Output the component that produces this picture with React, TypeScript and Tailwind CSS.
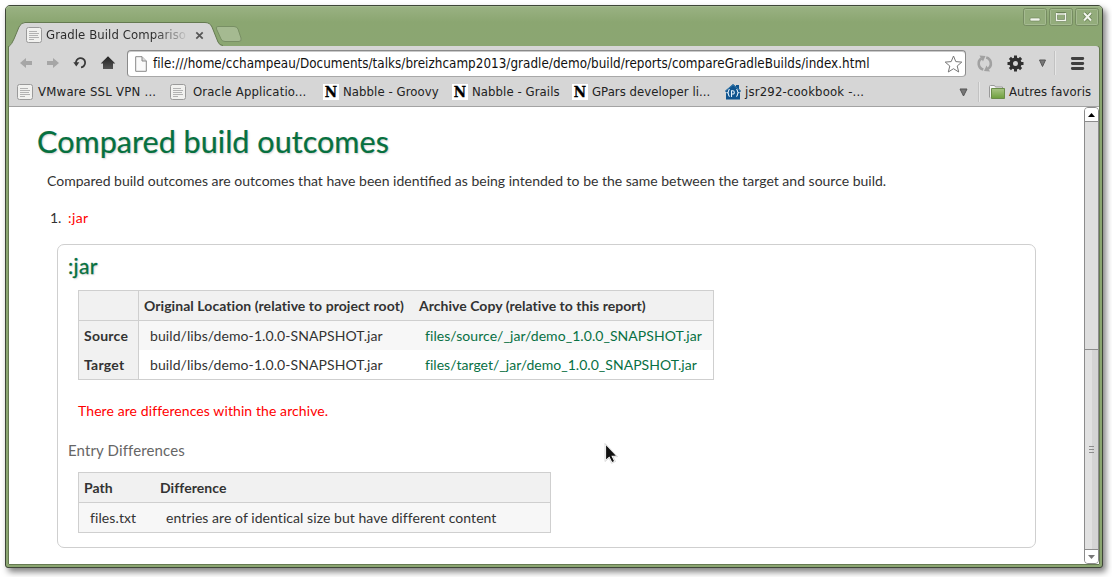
import React from "react";

const ui = "font-['DejaVu_Sans_Condensed','DejaVu_Sans',sans-serif] [font-stretch:condensed]";

function PageIcon() {
  return (
    <svg width="16" height="16" viewBox="0 0 16 16" className="shrink-0">
      <rect x="0.5" y="0.5" width="15" height="15" rx="2" fill="#f1f1ef" stroke="#9a9a9a" />
      <path d="M3 4.5h8M3 6.5h10M3 8.5h9M3 10.5h10M3 12.5h5" stroke="#b2b2b2" />
    </svg>
  );
}

function NabbleIcon() {
  return (
    <span className="flex h-4 w-4 shrink-0 items-center justify-center bg-white font-['DejaVu_Serif',serif] text-[15px] leading-4 font-bold text-black [-webkit-text-stroke:0.3px_#000]">
      N
    </span>
  );
}

function HouseIcon() {
  return (
    <svg width="16" height="16" viewBox="0 0 16 16" className="shrink-0">
      <path d="M8 0L11 2.5V1h3v4l2 2-1 1v7.5H1V8L0 7z" fill="#0f548f" />
      <path d="M0.5 7L8 .8 15.500 7" fill="none" stroke="#3b7cab" />
      <path d="M4.800 5.500q-1.300 0-1.300 1.500t-1 1.800q1 .3 1 1.800t1.300 1.900M11.200 5.500q1.300 0 1.300 1.500t1 1.800q-1 .3-1 1.800t-1.300 1.900M6.500 13V6.800h1.300q1.500 0 1.500 1.600T7.800 10H6.500" fill="none" stroke="#e4f0fa" strokeWidth="1.100" />
    </svg>
  );
}

function Tri() {
  return (
    <svg width="9" height="9" viewBox="0 0 9 9" className="shrink-0">
      <path d="M1 1h7L4.500 8z" fill="#777" stroke="#555" />
    </svg>
  );
}

function TabStrip() {
  return (
    <div className="relative flex h-[40px] shrink-0 rounded-t-[4px] bg-linear-to-b from-[#9ab283] via-[#8ba671] via-40% to-[#8ba672] shadow-[inset_0_1px_0_#a4ba8f]">
      <svg width="245" height="42" viewBox="6 6 245 42" className="absolute top-0 left-0">
        <path d="M9 48V46Q12 44 14 39L19 27Q21 22.500 25 22.500H205Q210 22.500 212 27L218 42Q219.500 45.500 223 46V48z" fill="#d6d6d6" />
        <path d="M8.500 47Q12 44 14 39L19 27Q21 22.500 25 22.500H205Q210 22.500 212 27L218 42Q219.500 45.500 223 45.500" fill="none" stroke="#657a51" />
        <path d="M218 26.500H234Q237 26.500 238 29L241 38Q242 41.500 239 41.500H225Q222 41.500 221 39L216.500 29Q215.500 26.500 218 26.500z" fill="#a5ba91" stroke="#788f64" />
      </svg>
      <div className="relative mt-[17px] ml-5 flex h-6 items-center">
        <PageIcon />
        <span className={`${ui} ml-1 w-[143px] overflow-hidden bg-linear-to-r from-[#2b2b2b] from-75% to-[#d6d6d6] bg-clip-text text-[13px] tracking-[0.08px] whitespace-nowrap text-transparent`}>
          Gradle Build Compariso
        </span>
        <svg width="9" height="9" viewBox="0 0 9 9" className="ml-[6px]">
          <path d="M1.300 1.300l6.400 6.400M7.700 1.300l-6.400 6.400" stroke="#555" strokeWidth="1.700" />
        </svg>
      </div>
      <div className="absolute top-0 right-[2px] h-[22px] w-[78px]">
        <svg width="78" height="22" viewBox="1022 6 78 22">
          {[1023.5, 1049.5, 1075.5].map((x) => (
            <g key={x}>
              <rect x={x} y="8.500" width="23" height="17" rx="2" fill="#93ac7b" stroke="#768c62" />
              <rect x={x + 1} y="9.500" width="21" height="15" rx="1" fill="none" stroke="#a5ba91" />
            </g>
          ))}
          <rect x="1030" y="18" width="10" height="3" rx="1" fill="#f2f5ed" stroke="#687f54" strokeWidth=".6" />
          <rect x="1056.500" y="13.500" width="9" height="7" rx="1" fill="none" stroke="#687f54" strokeWidth="3" />
          <path d="M1056.500 13v7.500h9V13M1056 14h10" fill="none" stroke="#f2f5ed" strokeWidth="1.500" />
          <path d="M1084 13l7 7.500M1091 13l-7 7.500" stroke="#687f54" strokeWidth="3.500" />
          <path d="M1084 13l7 7.500M1091 13l-7 7.500" stroke="#f2f5ed" strokeWidth="2" />
        </svg>
      </div>
    </div>
  );
}

function Toolbar() {
  return (
    <div className="flex h-[32px] shrink-0 items-start pt-1">
      <svg width="118" height="28" viewBox="9 50 118 28" className="shrink-0">
        <defs>
          <linearGradient id="home" x1="0" y1="0" x2="0" y2="1">
            <stop offset="0" stopColor="#222" />
            <stop offset="1" stopColor="#555" />
          </linearGradient>
        </defs>
        <path d="M20 63l6-5v3h6v4h-6v3z" fill="#a6a6a6" />
        <path d="M59 63l-6-5v3h-6v4h6v3z" fill="#a6a6a6" />
        <path d="M76 63.500A4.600 4.600 0 1 1 81 67.300" fill="none" stroke="#3a3a3a" strokeWidth="1.800" />
        <path d="M73.300 62.300h6l-3 4.200z" fill="#3a3a3a" />
        <path d="M108 56.300l7.300 7.200h-2.300v5.500h-10v-5.500h-2.300z" fill="url(#home)" />
      </svg>
      <div className="flex h-[27px] w-[839px] shrink-0 items-center rounded-[4px] border border-[#8a8a8a] border-b-[#a8a8a8] bg-white px-[7px] shadow-[inset_0_1px_0_#c9c9c9]">
        <svg width="12" height="16" viewBox="0 0 12 16" className="shrink-0">
          <path d="M.7.700h6.300l4.300 4.300v10.300H.7z" fill="#fafafa" stroke="#888" />
          <path d="M7 .7V5h4.300" fill="#ddd" stroke="#888" />
        </svg>
        <span className={`${ui} ml-[6px] text-[13.333px] tracking-[0.028px] whitespace-nowrap text-[#111]`}>
          file:///home/cchampeau/Documents/talks/breizhcamp2013/gradle/demo/build/reports/compareGradleBuilds/index.html
        </span>
        <svg width="19" height="18" viewBox="0 0 19 18" className="-mr-[5px] ml-auto shrink-0">
          <path d="M9.500 1l2.300 5.600 6 .5-4.600 3.900 1.500 6-5.200-3.300L4.300 17l1.500-6L1.200 7.100l6-.5z" fill="#fff" stroke="#777" strokeLinejoin="round" />
        </svg>
      </div>
      <svg width="133" height="28" viewBox="966 50 133 28" className="shrink-0">
        <g fill="none" stroke="#a1a1a1" strokeWidth="2.600">
          <path d="M983.300 69.500A6.200 6.200 0 0 1 981.500 58.300" />
          <path d="M986.200 57.500A6.200 6.200 0 0 1 988 68.700" />
        </g>
        <path d="M979.500 55.500l6 .5-2.500 5.500zM990 71.500l-6-.5 2.500-5.500z" fill="#a1a1a1" />
        <g stroke="#303030" strokeWidth="3">
          <path d="M1015.500 55.500v16M1007.500 63.500h16M1009.900 57.900l11.200 11.200M1021.100 57.900l-11.200 11.200" />
        </g>
        <circle cx="1015.500" cy="63.500" r="4.300" fill="#d6d6d6" stroke="#303030" strokeWidth="3.600" />
        <path d="M1039.500 60h6l-3 6.500z" fill="#777" stroke="#555" />
        <path d="M1054.500 51v24" stroke="#c2c2c2" />
        <path d="M1055.500 51v24" stroke="#e6e6e6" />
        <path d="M1072.300 58.500h10.500M1072.300 63.500h10.500M1072.300 68.500h10.500" stroke="#404040" strokeWidth="2.800" strokeLinecap="round" />
      </svg>
    </div>
  );
}

function Mark({ icon, label, box, gap = "gap-1", tracking = "tracking-[0.08px]" }: { icon: React.ReactNode; label: string; box: string; gap?: string; tracking?: string }) {
  return (
    <div className={`flex shrink-0 items-center whitespace-nowrap ${box} ${gap} ${tracking}`}>
      {icon}
      <span>{label}</span>
    </div>
  );
}

function Bookmarks() {
  return (
    <div className={`${ui} flex h-[29px] shrink-0 items-center border-b border-[#a3a3a3] pl-2 text-[13px] text-[#222]`}>
      <Mark icon={<PageIcon />} label="VMware SSL VPN ..." box="w-[153px]" gap="gap-[5px]" tracking="tracking-[0.24px]" />
      <Mark icon={<PageIcon />} label="Oracle Applicatio..." box="w-[153px]" gap="gap-[7px]" tracking="tracking-[0.14px]" />
      <Mark icon={<NabbleIcon />} label="Nabble - Groovy" box="w-[129px]" />
      <Mark icon={<NabbleIcon />} label="Nabble - Grails" box="w-[120px]" />
      <Mark icon={<NabbleIcon />} label="GPars developer li..." box="w-[153px]" tracking="tracking-[0.05px]" />
      <Mark icon={<HouseIcon />} label="jsr292-cookbook -..." box="w-[234px]" tracking="tracking-[0.17px]" />
      <Tri />
      <div className="ml-[10px] h-5 w-[2px] border-l border-[#c2c2c2] bg-[#e6e6e6]" />
      <svg width="16" height="14" viewBox="0 0 16 14" className="mr-1 ml-[9px] shrink-0">
        <defs>
          <linearGradient id="folder" x1="0" y1="0" x2="0" y2="1">
            <stop offset="0" stopColor="#a9c585" />
            <stop offset="1" stopColor="#6d9f3c" />
          </linearGradient>
        </defs>
        <path d="M.5 12.500V1.500q0-1 1-1h4l1 1.500h7v3" fill="#f5f5f5" stroke="#999" />
        <path d="M2.500 3.500h13v10h-13z" fill="url(#folder)" stroke="#6a8c49" />
      </svg>
      <span className="tracking-[0.08px] whitespace-nowrap">Autres favoris</span>
    </div>
  );
}

function Scrollbar() {
  return (
    <div className="flex w-[15px] shrink-0 flex-col rounded-[4px] border border-[#8c8c8c] bg-[#dedede]">
      <div className="flex h-[14px] items-center justify-center rounded-t-[3px] border-b border-[#8c8c8c] bg-white">
        <svg width="7" height="4" viewBox="0 0 7 4"><path d="M3.500 0L7 4H0z" fill="#000" /></svg>
      </div>
      <div className="h-[227px] bg-[#dedede]" />
      <div className="flex flex-1 items-center justify-center border-y border-[#8c8c8c] bg-linear-to-r from-[#e1e1e1] from-55% to-[#d4d4d4] to-55%">
        <svg width="5" height="7" viewBox="0 0 5 7"><path d="M0 .5h5M0 3.500h5M0 6.500h5" stroke="#8c8c8c" /></svg>
      </div>
      <div className="flex h-[13px] items-center justify-center rounded-b-[3px] bg-white">
        <svg width="7" height="4" viewBox="0 0 7 4"><path d="M0 0h7L3.500 4z" fill="#777" /></svg>
      </div>
    </div>
  );
}

function LocationTable() {
  const rows = [
    ["Source", "files/source/_jar/demo_1.0.0_SNAPSHOT.jar", "bg-[#f7f7f7]", "tracking-[0.06px]"],
    ["Target", "files/target/_jar/demo_1.0.0_SNAPSHOT.jar", "bg-white", "tracking-[0.03px]"],
  ];
  return (
    <div className="ml-[10px] grid w-[636px] grid-cols-[60px_275px_1fr] border border-[#cfcfcf] tracking-[0.06px]">
      <div className="h-[30px] border-r border-b border-[#cfcfcf] bg-[#f1f1f1]" />
      <div className="h-[30px] border-b border-[#cfcfcf] bg-[#f1f1f1] pl-[5px] leading-[30px] font-bold whitespace-nowrap">Original Location (relative to project root)</div>
      <div className="h-[30px] border-b border-[#cfcfcf] bg-[#f1f1f1] pl-[5px] leading-[30px] font-bold tracking-[0.03px] whitespace-nowrap">Archive Copy (relative to this report)</div>
      {rows.map(([name, link, bg, tracking]) => (
        <React.Fragment key={name}>
          <div className="h-[29px] border-r border-[#cfcfcf] bg-[#f1f1f1] pl-[5px] leading-[30px] font-bold tracking-[0.25px]">{name}</div>
          <div className={`h-[29px] ${bg} pl-[11px] leading-[30px] tracking-[0.08px] whitespace-nowrap`}>build/libs/demo-1.0.0-SNAPSHOT.jar</div>
          <div className={`h-[29px] ${bg} ${tracking} pl-[11px] leading-[30px] whitespace-nowrap text-[#087044]`}>{link}</div>
        </React.Fragment>
      ))}
    </div>
  );
}

function Report() {
  return (
    <main className="h-full w-[1075px] overflow-hidden bg-white pl-[28px] font-['Lato',sans-serif] text-[14px] leading-5 text-[#333]">
      <h1 className="mt-[17px] h-[36px] text-[30.600px] leading-[36px] whitespace-nowrap text-[#06703f] [-webkit-text-stroke:0.2px_#06703f] [text-shadow:1px_1px_2px_#ccc]">Compared build outcomes</h1>
      <p className="mt-[11px] ml-[10px] whitespace-nowrap">
        Compared build outcomes are outcomes that have been identified as being intended to be the same between the target and source build.
      </p>
      <div className="mt-[17px] ml-[13px] flex h-5">
        <span className="w-[18px]">1.</span>
        <span className="tracking-[0.4px] text-[#f00]">:jar</span>
      </div>
      <section className="mt-[16px] ml-[20px] h-[304px] w-[979px] rounded-[7px] border border-[#cfcfcf] pl-[10px]">
        <h2 className="mt-[7px] h-[28px] text-[21px] leading-[28px] tracking-[0.3px] text-[#06703f] [-webkit-text-stroke:0.3px_#06703f] [text-shadow:1px_1px_2px_#ccc]">:jar</h2>
        <div className="h-[10px]" />
        <LocationTable />
        <p className="mt-[21px] ml-[10px] tracking-[0.09px] text-[#f00]">There are differences within the archive.</p>
        <h3 className="mt-[19px] text-[15px] tracking-[0.13px] text-[#666]">Entry Differences</h3>
        <div className="mt-[12px] ml-[10px] grid w-[473px] grid-cols-[76px_1fr] border border-[#cfcfcf] tracking-[0.06px]">
          <div className="h-[30px] border-b border-[#cfcfcf] bg-[#f1f1f1] pl-[5px] leading-[30px] font-bold">Path</div>
          <div className="h-[30px] border-b border-[#cfcfcf] bg-[#f1f1f1] pl-[5px] leading-[30px] font-bold">Difference</div>
          <div className="h-[29px] bg-[#f7f7f7] pl-[11px] leading-[30px] tracking-[0.1px]">files.txt</div>
          <div className="h-[29px] bg-[#f7f7f7] pl-[11px] leading-[30px]">entries are of identical size but have different content</div>
        </div>
      </section>
    </main>
  );
}

export default function App() {
  return (
    <div className="relative h-[577px] w-[1112px] overflow-hidden bg-white pt-[5px] pl-[5px]">
      <div className="flex h-[563px] w-[1098px] flex-col rounded-t-[5px] rounded-b-[3px] border border-[#3e4638] bg-[#8ba671] shadow-[3px_4px_6px_rgba(0,0,0,0.5)]">
        <TabStrip />
        <div className="ml-[3px] flex w-[1090px] flex-1 flex-col rounded-tr-[3px] bg-[#d6d6d6] shadow-[0_-1px_0_#657a51,1px_0_0_#657a51,-1px_0_0_#657a51,0_1px_0_#657a51]">
          <Toolbar />
          <Bookmarks />
          <div className="flex min-h-0 flex-1 bg-white">
            <Report />
            <Scrollbar />
          </div>
        </div>
        <div className="h-[3px] shrink-0" />
      </div>
      <svg width="14" height="22" viewBox="0 0 14 22" className="absolute top-[443px] left-[604px]">
        <path d="M1.500.8v17l3.700-3.300 2.700 5.300 3-1.400-2.600-5.100h5z" fill="#111" stroke="#fff" strokeWidth="1.200" />
        <path d="M1 .5v18l4-3.500 2.500 5.300 4-1.800-2.500-4.800h4.500z" fill="none" stroke="#aaa" strokeWidth=".4" />
      </svg>
    </div>
  );
}
